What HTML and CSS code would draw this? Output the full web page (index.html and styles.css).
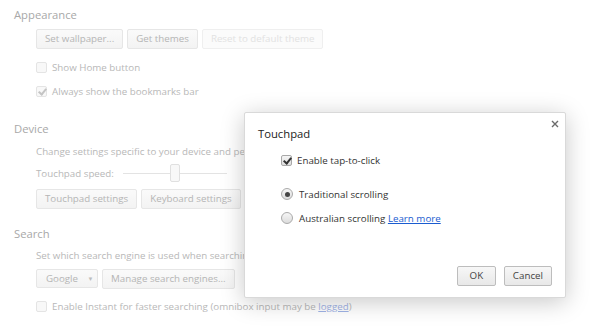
FILE: index.html
```html
<!DOCTYPE html>
<html lang="en">
<head>
    <meta charset="UTF-8">
    <title>Settings - Touchpad</title>
    <link rel="stylesheet" href="styles.css">
</head>
<body>
    <div class="page">
        <section class="section">
            <h3 class="section-title">Appearance</h3>
            <div class="section-body">
                <div class="button-row first">
                    <button class="btn">Set wallpaper...</button>
                    <button class="btn">Get themes</button>
                    <button class="btn disabled">Reset to default theme</button>
                </div>
                <div class="check-row gap-10">
                    <span class="box"></span>
                    <span>Show Home button</span>
                </div>
                <div class="check-row gap-8">
                    <span class="box checked"></span>
                    <span>Always show the bookmarks bar</span>
                </div>
            </div>
        </section>

        <section class="section device">
            <h3 class="section-title">Device</h3>
            <div class="section-body">
                <div class="line intro">Change settings specific to your device and peripherals.</div>
                <div class="slider-row">
                    <span class="slider-label">Touchpad speed:</span>
                    <span class="slider">
                        <span class="track"></span>
                        <span class="thumb"></span>
                    </span>
                </div>
                <div class="button-row buttons-device">
                    <button class="btn">Touchpad settings</button>
                    <button class="btn">Keyboard settings</button>
                </div>
            </div>
        </section>

        <section class="section search">
            <h3 class="section-title">Search</h3>
            <div class="section-body">
                <div class="line intro-search">Set which search engine is used when searching from the omnibox.</div>
                <div class="button-row select-row">
                    <button class="btn select">Google <span class="caret">▼</span></button>
                    <button class="btn">Manage search engines...</button>
                </div>
                <div class="check-row gap-9">
                    <span class="box"></span>
                    <span>Enable Instant for faster searching (omnibox input may be <a class="bg-link">logged</a>)</span>
                </div>
            </div>
        </section>
    </div>

    <div class="dialog">
        <div class="dialog-head">
            <h2 class="dialog-title">Touchpad</h2>
            <svg class="close" width="8" height="8" viewBox="0 0 8 8">
                <path d="M1 1 L7 7 M7 1 L1 7" stroke="#6b6b6b" stroke-width="1.4" fill="none"/>
            </svg>
        </div>
        <div class="dialog-body">
            <div class="opt">
                <span class="dbox checked"></span>
                <span>Enable tap-to-click</span>
            </div>
            <div class="opt radio-first">
                <span class="radio on"></span>
                <span>Traditional scrolling</span>
            </div>
            <div class="opt radio-second">
                <span class="radio"></span>
                <span>Australian scrolling <a class="link">Learn more</a></span>
            </div>
        </div>
        <div class="dialog-foot">
            <button class="dbtn ok">OK</button>
            <button class="dbtn">Cancel</button>
        </div>
    </div>
</body>
</html>
```

FILE: styles.css
```css
* {
    box-sizing: border-box;
    font-family: 'Open Sans', 'Noto Sans', sans-serif;
}
body {
    margin: 0;
    width: 608px;
    height: 326px;
    overflow: hidden;
    background-color: #fff;
    position: relative;
    font-size: 9.75px;
    color: #b8b8b8;
}
.page {
    padding: 7px 0 0 14px;
}
.section-title {
    margin: 0;
    font-size: 11.25px;
    font-weight: 400;
    line-height: 16px;
    height: 16px;
    color: #a8a8a8;
}
.section-body {
    padding-left: 22px;
}
.device {
    margin-top: 22px;
}
.search {
    margin-top: 17px;
}

/* buttons of the settings page */
.button-row {
    display: flex;
    gap: 4px;
}
.button-row.first {
    margin-top: 6px;
}
.buttons-device {
    margin-top: 7px;
}
.select-row {
    margin-top: 5px;
}
.btn {
    height: 20px;
    padding: 0 8px;
    border: 1px solid #e6e6e6;
    border-radius: 2px;
    background: linear-gradient(#fafafa, #f3f3f3);
    color: #b5b5b5;
    font-size: 9.75px;
    line-height: 18px;
}
.btn.disabled {
    color: #e2e2e2;
    border-color: #efefef;
    background: #fbfbfb;
}
.btn.select {
    height: 19px;
    width: 62px;
    padding: 0 0 0 9px;
    text-align: left;
}
.caret {
    font-size: 6px;
    margin-left: 7px;
    vertical-align: 1px;
    color: #bcbcbc;
}

/* checkbox rows */
.check-row {
    display: flex;
    align-items: center;
    gap: 5px;
    height: 16px;
}
.gap-10 { margin-top: 10px; }
.gap-8 { margin-top: 8px; }
.gap-9 { margin-top: 9px; }
.box {
    width: 11px;
    height: 11px;
    border: 1px solid #e4e4e4;
    border-radius: 2px;
    background: #f8f8f8;
    position: relative;
}
.box.checked::after {
    content: '';
    position: absolute;
    left: 3px;
    top: 0px;
    width: 3px;
    height: 6px;
    border: solid #c4c4c4;
    border-width: 0 2px 2px 0;
    transform: rotate(40deg);
}
.bg-link {
    color: #9fb3e6;
    text-decoration: underline;
}

.line {
    height: 16px;
    line-height: 16px;
}
.intro {
    margin-top: 7px;
}
.intro-search {
    margin-top: 6px;
}

/* slider */
.slider-row {
    display: flex;
    align-items: center;
    height: 18px;
    margin-top: 4px;
}
.slider-label {
    width: 87px;
}
.slider {
    position: relative;
    width: 104px;
    height: 18px;
}
.track {
    position: absolute;
    left: 0;
    right: 0;
    top: 9px;
    height: 1px;
    background: #e3e3e3;
}
.thumb {
    position: absolute;
    left: 47px;
    top: 0;
    width: 10px;
    height: 18px;
    border: 1px solid #e0e0e0;
    border-radius: 2px;
    background: #f8f8f8;
}

/* dialog */
.dialog {
    position: absolute;
    left: 244px;
    top: 112px;
    width: 322px;
    height: 186px;
    background: #fff;
    border: 1px solid #d9d9d9;
    border-radius: 2px;
    box-shadow: 0 4px 23px rgba(0, 0, 0, 0.22);
    color: #333;
    display: flex;
    flex-direction: column;
}
.dialog-head {
    display: flex;
    justify-content: space-between;
    padding: 12px 6px 0 13px;
    height: 30px;
}
.dialog-title {
    margin: 0;
    font-size: 11.25px;
    font-weight: 400;
    line-height: 18px;
    color: #222;
}
.close {
    margin-top: -5px;
}
.dialog-body {
    padding-left: 36px;
}
.opt {
    display: flex;
    align-items: center;
    gap: 5px;
    height: 16px;
    font-size: 9.75px;
    color: #333;
}
.opt:first-child {
    margin-top: 9px;
}
.radio-first {
    margin-top: 18px;
}
.radio-second {
    margin-top: 8px;
}
.dbox {
    width: 11px;
    height: 11px;
    border: 1px solid #a8a8a8;
    border-radius: 2px;
    background: linear-gradient(#f5f5f5, #dedede);
    position: relative;
}
.dbox.checked::after {
    content: '';
    position: absolute;
    left: 3px;
    top: 0px;
    width: 3px;
    height: 6px;
    border: solid #333;
    border-width: 0 2px 2px 0;
    transform: rotate(40deg);
}
.radio {
    width: 12px;
    height: 12px;
    border: 1px solid #aaa;
    border-radius: 50%;
    background: linear-gradient(#f6f6f6, #dcdcdc);
    position: relative;
    margin-right: 1px;
}
.radio.on::after {
    content: '';
    position: absolute;
    left: 2.5px;
    top: 2.5px;
    width: 5px;
    height: 5px;
    border-radius: 50%;
    background: #444;
}
.link {
    color: #1a5cd0;
    text-decoration: underline;
}
.dialog-foot {
    margin-top: auto;
    display: flex;
    justify-content: flex-end;
    gap: 8px;
    padding: 0 13px 11px 0;
}
.dbtn {
    height: 20px;
    min-width: 39px;
    padding: 0 8px;
    border: 1px solid #bdbdbd;
    border-radius: 2px;
    background: linear-gradient(#f7f7f7, #e8e8e8);
    color: #444;
    font-size: 9.75px;
    line-height: 18px;
}
```
